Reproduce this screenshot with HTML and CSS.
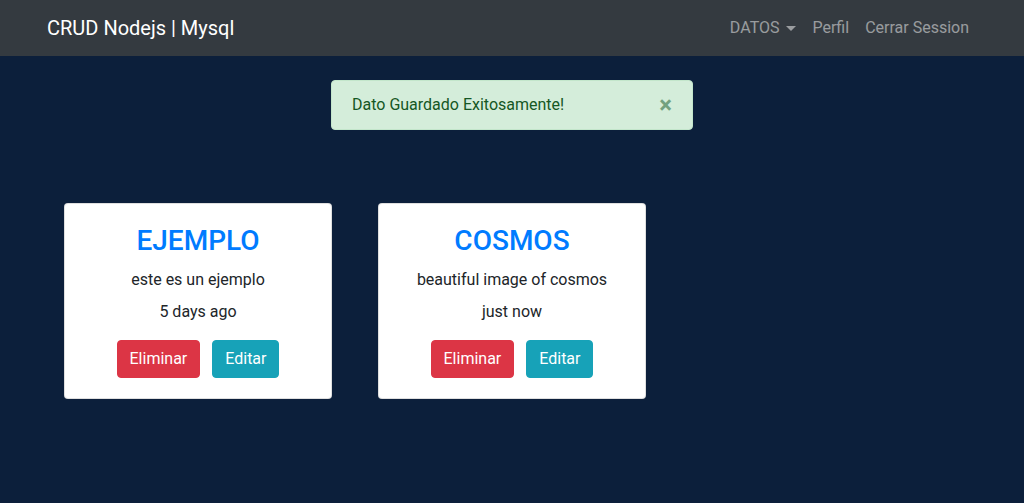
FILE: index.html
```html
<!DOCTYPE html>
<html lang="es">
<head>
<meta charset="utf-8">
<title>CRUD Nodejs | Mysql</title>
<link rel="stylesheet" href="styles.css">
</head>
<body>
<nav class="navbar">
  <div class="nav-container">
    <a class="brand" href="#">CRUD Nodejs | Mysql</a>
    <ul class="nav-links">
      <li><a class="nav-link dropdown" href="#">DATOS <span class="caret"></span></a></li>
      <li><a class="nav-link" href="#">Perfil</a></li>
      <li><a class="nav-link" href="#">Cerrar Session</a></li>
    </ul>
  </div>
</nav>
<main class="container">
  <div class="alert">
    <span>Dato Guardado Exitosamente!</span>
    <button class="close" type="button">&times;</button>
  </div>
  <div class="row">
    <div class="col">
      <div class="card">
        <h3 class="card-title">EJEMPLO</h3>
        <p class="card-text">este es un ejemplo</p>
        <p class="card-date">5 days ago</p>
        <div class="actions">
          <a class="btn btn-danger" href="#">Eliminar</a>
          <a class="btn btn-info" href="#">Editar</a>
        </div>
      </div>
    </div>
    <div class="col">
      <div class="card">
        <h3 class="card-title">COSMOS</h3>
        <p class="card-text">beautiful image of cosmos</p>
        <p class="card-date">just now</p>
        <div class="actions">
          <a class="btn btn-danger" href="#">Eliminar</a>
          <a class="btn btn-info" href="#">Editar</a>
        </div>
      </div>
    </div>
  </div>
</main>
</body>
</html>
```

FILE: styles.css
```css
* { box-sizing: border-box; }
html, body { margin: 0; padding: 0; }
body {
  font-family: Roboto, "Liberation Sans", sans-serif;
  font-size: 16px;
  line-height: 1.5;
  color: #212529;
  background: #0c1f3b;
  min-height: 503px;
}
a { text-decoration: none; }

.navbar {
  background: #343a40;
  height: 56px;
}
.nav-container {
  width: 960px;
  margin: 0 auto;
  padding: 0 15px;
  height: 56px;
  display: flex;
  align-items: center;
  justify-content: space-between;
}
.brand {
  color: #fff;
  font-size: 20px;
  line-height: 30px;
  padding: 5px 0;
}
.nav-links {
  list-style: none;
  margin: 0;
  padding: 0;
  display: flex;
}
.nav-link {
  display: block;
  padding: 8px;
  color: rgba(255,255,255,.5);
  line-height: 24px;
}
.dropdown { display: flex; align-items: center; }
.caret {
  display: inline-block;
  margin-left: 7px;
  border-top: 5px solid;
  border-left: 5px solid transparent;
  border-right: 5px solid transparent;
  width: 0;
  height: 0;
}

.container {
  width: 960px;
  margin: 0 auto;
  padding: 24px;
}
.alert {
  position: relative;
  width: 362px;
  margin: 0 auto;
  padding: 12px 64px 12px 20px;
  background: #d4edda;
  border: 1px solid #c3e6cb;
  color: #155724;
  border-radius: 4px;
}
.close {
  position: absolute;
  top: 0;
  right: 0;
  padding: 12px 20px;
  border: 0;
  background: transparent;
  font-family: inherit;
  font-size: 24px;
  font-weight: 700;
  line-height: 24px;
  color: #155724;
  opacity: .5;
  cursor: pointer;
}

.row {
  display: flex;
  margin: 65px -15px 0;
}
.col {
  width: 314px;
  padding: 0 15px;
}
.card {
  margin: 8px;
  background: #fff;
  border: 1px solid rgba(0,0,0,.125);
  border-radius: 4px;
  padding: 20px;
  text-align: center;
}
.card-title {
  margin: 0 0 10px;
  font-size: 28px;
  font-weight: 500;
  line-height: 1.2;
  color: #007bff;
}
.card-text { margin: 0 0 8px; }
.card-date { margin: 0 0 16px; }
.actions {
  display: flex;
  justify-content: center;
  gap: 12px;
}
.btn {
  display: inline-block;
  padding: 6px 12px;
  line-height: 24px;
  border: 1px solid transparent;
  border-radius: 4px;
  color: #fff;
}
.btn-danger { background: #dc3545; border-color: #dc3545; }
.btn-info { background: #17a2b8; border-color: #17a2b8; }
```
